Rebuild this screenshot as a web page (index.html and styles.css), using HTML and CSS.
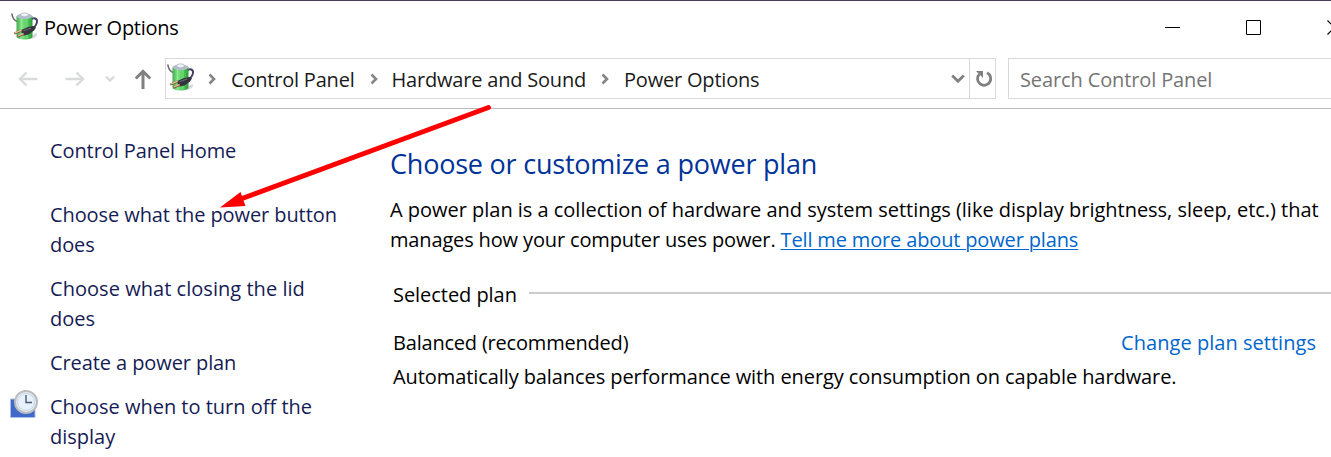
FILE: index.html
```html
<!DOCTYPE html>
<html lang="en">
<head>
  <meta charset="UTF-8" />
  <meta name="viewport" content="width=device-width, initial-scale=1.0"/>
  <title>Power Options</title>
  <link rel="stylesheet" href="styles.css">
</head>
<body>
  <!-- Shared battery icon -->
  <svg class="defs" width="0" height="0" aria-hidden="true">
    <defs>
      <linearGradient id="green" x1="0" x2="1" y1="0" y2="0">
        <stop offset="0" stop-color="#45a850"/>
        <stop offset="0.3" stop-color="#7fe484"/>
        <stop offset="0.65" stop-color="#55cc5f"/>
        <stop offset="1" stop-color="#2c9a3a"/>
      </linearGradient>
      <symbol id="battery" viewBox="0 0 28 30">
        <path d="M16 27.500L25 21C28 23 24 27.500 16 27.500Z" fill="#d8d8dc"/>
        <path d="M0.800 1.500C1.200 5 2.500 8 6 9.500" fill="none" stroke="#686874" stroke-width="1.600"/>
        <path d="M20 7.500C23 5 26.500 6.500 26 10C25.700 12.500 24 14.500 22 16" fill="none" stroke="#443c62" stroke-width="1.900"/>
        <path d="M5.500 4V24.500C5.500 28.500 21.500 28.500 21.500 24.500V4Z" fill="url(#green)"/>
        <path d="M10.500 7V26M16 7V26" stroke="#b0f2a8" stroke-width="0.800" opacity="0.600"/>
        <ellipse cx="13.500" cy="4.200" rx="7.800" ry="2.900" fill="#b2beca"/>
        <ellipse cx="13.500" cy="2.800" rx="3.800" ry="2" fill="#eef3f8" stroke="#98a5b2" stroke-width="0.600"/>
        <path d="M10.500 18L17 15L22.500 14L25 15.500L23 18.500L17.500 22.500L13 23.500L10.500 21Z" fill="#34343c"/>
        <path d="M12.500 18.800L20 16" stroke="#73737e" stroke-width="1"/>
        <path d="M3.200 21.500L11 18.500M6.500 24.500L13 21.800" stroke="#7a573a" stroke-width="2.400"/>
        <path d="M3.500 21L10.500 18.400M6.800 24L12.500 21.600" stroke="#e9c79c" stroke-width="1.200"/>
      </symbol>
    </defs>
  </svg>

  <header class="titlebar">
    <svg class="app-icon" width="28" height="30"><use href="#battery"/></svg>
    <span class="title">Power Options</span>
    <div class="window-buttons">
      <svg width="15" height="15" viewBox="0 0 15 15"><path d="M0 7.500H15" stroke="#000"/></svg>
      <svg width="15" height="15" viewBox="0 0 15 15"><path d="M0.500 0.500H14.500V14.500H0.500Z" fill="none" stroke="#000"/></svg>
      <svg width="15" height="15" viewBox="0 0 15 15"><path d="M0.500 0.500L14.500 14.500M14.500 0.500L0.500 14.500" stroke="#000" stroke-width="1.200"/></svg>
    </div>
  </header>

  <nav class="toolbar">
    <div class="history">
      <svg class="back" width="20" height="16" viewBox="0 0 20 16"><path d="M19.500 8H2M8.500 1.500L2 8L8.500 14.500" fill="none" stroke="#d9dbdb" stroke-width="2.400"/></svg>
      <svg class="forward" width="20" height="16" viewBox="0 0 20 16"><path d="M0.500 8H18M11.500 1.500L18 8L11.500 14.500" fill="none" stroke="#d9dbdb" stroke-width="2.400"/></svg>
      <svg class="recent" width="10" height="8" viewBox="0 0 10 8"><path d="M1 1.500L5 5.500L9 1.500" fill="none" stroke="#d9dbdb" stroke-width="2.400"/></svg>
      <svg class="up" width="18" height="20" viewBox="0 0 18 20"><path d="M9 20V2.500M1.800 9.500L9 2.300L16.200 9.500" fill="none" stroke="#808080" stroke-width="3"/></svg>
    </div>
    <div class="address">
      <svg class="address-icon" width="28" height="30"><use href="#battery"/></svg>
      <svg class="sep" width="8" height="12" viewBox="0 0 8 12"><path d="M1.500 1.500L6 6L1.500 10.500" fill="none" stroke="#858585" stroke-width="2.600"/></svg>
      <span class="crumb crumb-panel">Control Panel</span>
      <svg class="sep" width="8" height="12" viewBox="0 0 8 12"><path d="M1.500 1.500L6 6L1.500 10.500" fill="none" stroke="#858585" stroke-width="2.600"/></svg>
      <span class="crumb crumb-hardware">Hardware and Sound</span>
      <svg class="sep" width="8" height="12" viewBox="0 0 8 12"><path d="M1.500 1.500L6 6L1.500 10.500" fill="none" stroke="#858585" stroke-width="2.600"/></svg>
      <span class="crumb crumb-power">Power Options</span>
      <svg class="drop" width="14" height="10" viewBox="0 0 14 10"><path d="M1.200 1.500L7 7.300L12.800 1.500" fill="none" stroke="#808080" stroke-width="2.800"/></svg>
      <div class="refresh">
        <svg width="18" height="18" viewBox="0 0 18 18"><path d="M12 2.800A6.600 6.600 0 1 1 4.300 4.200" fill="none" stroke="#808080" stroke-width="2.800"/><path d="M1 1H8V8L5.600 5.600L3.400 3.400Z" fill="#808080"/></svg>
      </div>
    </div>
    <div class="search">Search Control Panel</div>
  </nav>

  <div class="content">
    <aside class="sidebar">
      <a class="side-link home">Control Panel Home</a>
      <a class="side-link">Choose what the power button<br>does</a>
      <a class="side-link lid">Choose what closing the lid<br>does</a>
      <a class="side-link create">Create a power plan</a>
      <a class="side-link turn-off">
        <svg class="clock" width="28" height="28" viewBox="0 0 28 28">
          <path d="M0.500 9H25V27.500H0.500Z" fill="#3f68c9" stroke="#a9bfe8"/>
          <circle cx="16" cy="12" r="11" fill="#e6edf3" stroke="#b9bdc0" stroke-width="2"/>
          <circle cx="16" cy="12" r="8.500" fill="#e6f1fb" stroke="#c5d6e6" stroke-width="1"/>
          <path d="M16 5V12.500H22" fill="none" stroke="#4a5872" stroke-width="1.400"/>
        </svg>
        Choose when to turn off the<br>display
      </a>
    </aside>

    <main class="main">
      <h1>Choose or customize a power plan</h1>
      <p class="intro"><span class="intro-first">A power plan is a collection of hardware and system settings (like display brightness, sleep, etc.) that</span><br><span class="intro-second">manages how your computer uses power. <a class="more">Tell me more about power plans</a></span></p>
      <section class="plans">
        <div class="group"><span class="group-name">Selected plan</span></div>
        <div class="plan">
          <span class="plan-name">Balanced (recommended)</span>
          <a class="change">Change plan settings</a>
        </div>
        <p class="description">Automatically balances performance with energy consumption on capable hardware.</p>
      </section>
    </main>
  </div>

  <svg class="pointer" width="280" height="112" viewBox="215 100 280 112">
    <path d="M488.500 107.500L238 200" stroke="#fe0000" stroke-width="5" stroke-linecap="round"/>
    <path d="M220 207.500L240.500 192L245.500 206Z" fill="#fe0000"/>
  </svg>
</body>
</html>
```

FILE: styles.css
```css
* {
  margin: 0;
  padding: 0;
  box-sizing: border-box;
}
body {
  width: 1331px;
  height: 457px;
  overflow: hidden;
  position: relative;
  background: #fff;
  color: #000;
  font-family: 'Open Sans', 'Noto Sans', sans-serif;
  font-size: 20px;
  line-height: 30px;
  letter-spacing: -0.2px;
  white-space: nowrap;
}
svg {
  display: block;
  flex: none;
}
.defs {
  position: absolute;
}

/* Title bar */
.titlebar {
  display: flex;
  align-items: center;
  height: 54px;
  padding-left: 11px;
  border-top: 1px solid #493f5a;
}
.app-icon {
  margin-bottom: 2px;
}
.title {
  margin-left: 5px;
  letter-spacing: -0.26px;
}
.window-buttons {
  display: flex;
  gap: 66px;
  margin-left: auto;
  margin-right: -11px;
}

/* Toolbar */
.toolbar {
  display: flex;
  height: 55px;
  padding-top: 4px;
  border-bottom: 1px solid #b9b9b9;
}
.history {
  display: flex;
  align-items: center;
  width: 165px;
  height: 41px;
  padding-left: 18px;
}
.forward {
  margin-left: 27px;
}
.recent {
  margin-left: 20px;
}
.up {
  margin-left: 19px;
}
.address {
  display: flex;
  align-items: center;
  width: 831px;
  height: 41px;
  padding-left: 1px;
  border: 1px solid #d9d9d9;
}
.address-icon {
  margin-bottom: 2px;
}
.sep {
  margin-left: 15px;
}
.address-icon + .sep {
  margin-left: 13px;
}
.crumb {
  margin-left: 15px;
  padding-top: 2px;
  color: #1a1a1a;
}
.crumb-hardware {
  margin-left: 14px;
}
.drop {
  margin-left: auto;
  margin-right: 4px;
}
.refresh {
  display: flex;
  align-items: center;
  width: 26px;
  height: 39px;
  padding-left: 5px;
  border-left: 1px solid #d9d9d9;
}
.search {
  flex: 1;
  height: 41px;
  margin-left: 12px;
  padding: 6px 0 0 11px;
  border: 1px solid #d9d9d9;
  border-right: none;
  color: #757575;
  letter-spacing: -0.12px;
}

/* Content */
.content {
  display: flex;
}
.sidebar {
  display: flex;
  flex-direction: column;
  gap: 14px;
  width: 390px;
  padding: 27px 0 0 50px;
}
.side-link {
  color: #151c55;
  letter-spacing: -0.09px;
}
.home {
  margin-bottom: 20px;
}
.lid {
  letter-spacing: 0.04px;
}
.turn-off {
  position: relative;
  letter-spacing: 0;
}
.clock {
  position: absolute;
  left: -40px;
  top: -2px;
}
.main {
  flex: 1;
  padding-top: 35px;
}
h1 {
  font-size: 27px;
  font-weight: 400;
  line-height: 40px;
  letter-spacing: -0.22px;
  color: #003399;
}
.intro {
  margin-top: 11px;
}
.intro-first {
  letter-spacing: -0.02px;
}
.intro-second {
  letter-spacing: -0.15px;
}
.more {
  color: #0066cc;
  text-decoration: underline;
  text-decoration-thickness: 1px;
  text-underline-offset: 2px;
}
.change {
  color: #0066cc;
  letter-spacing: 0.04px;
}
.plans {
  padding: 25px 0 0 3px;
}
.group {
  display: flex;
  align-items: center;
  letter-spacing: -0.05px;
}
.group::after {
  content: '';
  flex: 1;
  height: 2px;
  margin: 0 0 4px 12px;
  background: #cccccc;
}
.plan {
  display: flex;
  justify-content: space-between;
  margin-top: 18px;
  padding-right: 15px;
}
.description {
  margin-top: 4px;
  letter-spacing: -0.085px;
}

/* Red arrow over the page */
.pointer {
  position: absolute;
  left: 215px;
  top: 100px;
}
```
